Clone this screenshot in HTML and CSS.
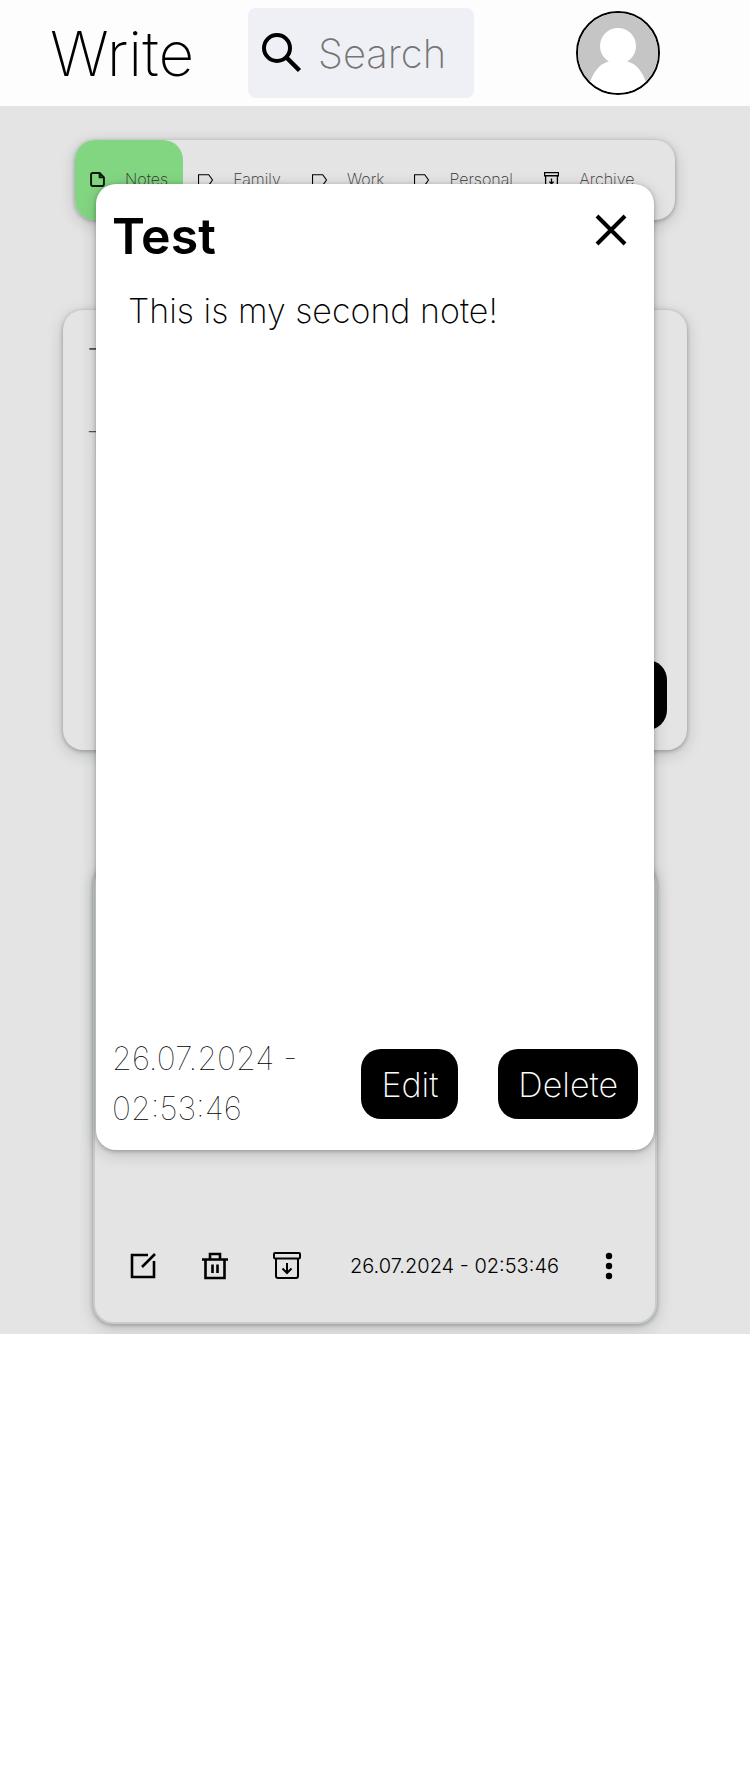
FILE: index.html
```html
<!DOCTYPE html>
<html lang="en">
<head>
<meta charset="utf-8">
<meta name="viewport" content="width=device-width, initial-scale=1">
<title>Write</title>
<link rel="stylesheet" href="styles.css">
</head>
<body>
<header class="topbar">
  <h1 class="brand">Write</h1>
  <label class="search">
    <svg class="search-icon" viewBox="0 0 40 40" aria-hidden="true"><circle cx="15" cy="15" r="13" fill="none" stroke="#000" stroke-width="4"/><path d="M24 24 37.500 37.500" stroke="#000" stroke-width="4.500"/></svg>
    <input class="search-input" type="search" placeholder="Search" aria-label="Search">
  </label>
  <button class="avatar" aria-label="Profile">
    <svg viewBox="0 0 80 80" aria-hidden="true"><rect width="80" height="80" fill="#c5c5c5"/><circle cx="40" cy="33" r="18" fill="#fff"/><path d="M32 48Q40 52 48 48C60 51 65 60 69 72V80H11V72C15 60 20 51 32 48Z" fill="#fff"/></svg>
  </button>
</header>
<main class="page">
  <nav class="tabs">
    <button class="tab tab-active"><svg class="tab-icon" viewBox="0 0 14 14" aria-hidden="true"><path d="M2.500 1H9L13 5V11.500Q13 13 11.500 13H2.500Q1 13 1 11.500V2.500Q1 1 2.500 1ZM9 1V5H13" fill="none" stroke="#0b1a0b" stroke-width="1.800"/></svg>Notes</button>
    <button class="tab"><svg class="tab-icon" viewBox="0 0 14 14" aria-hidden="true"><path d="M.5 2.500H10L13.500 7.500 10 12.500H.5Z" fill="none" stroke="#000"/></svg>Family</button>
    <button class="tab"><svg class="tab-icon" viewBox="0 0 14 14" aria-hidden="true"><path d="M.5 2.500H10L13.500 7.500 10 12.500H.5Z" fill="none" stroke="#000"/></svg>Work</button>
    <button class="tab"><svg class="tab-icon" viewBox="0 0 14 14" aria-hidden="true"><path d="M.5 2.500H10L13.500 7.500 10 12.500H.5Z" fill="none" stroke="#000"/></svg>Personal</button>
    <button class="tab"><svg class="tab-icon" viewBox="0 0 14 14" aria-hidden="true"><path d="M.5.5H13.500V3.500H.5ZM1.500 3.500V13.500H12.500V3.500M7 6V11M5 9 7 11 9 9" fill="none" stroke="#000" stroke-width="1.200"/></svg>Archive</button>
  </nav>
  <form class="composer">
    <input class="composer-title" type="text" placeholder="Title" aria-label="Title">
    <textarea class="composer-text" placeholder="Take a note..." aria-label="Note"></textarea>
    <button class="button composer-save" type="button">Save</button>
  </form>
  <article class="note">
    <footer class="note-footer">
      <button class="icon-button" aria-label="Edit note"><svg viewBox="0 0 28 28" aria-hidden="true"><path d="M19 3H3V25H25V9M13 15 26 2" fill="none" stroke="#000" stroke-width="2.600"/></svg></button>
      <button class="icon-button" aria-label="Delete note"><svg viewBox="0 0 28 28" aria-hidden="true"><path d="M1 7.500H27M4.500 7.500V26H23.500V7.500M9 7V2H19V7M11.500 12.500V21M16.500 12.500V21" fill="none" stroke="#000" stroke-width="2.600"/></svg></button>
      <button class="icon-button" aria-label="Archive note"><svg viewBox="0 0 28 28" aria-hidden="true"><path d="M2 1H26Q27 1 27 2V5Q27 6.500 25.500 6.500H2.500Q1 6.500 1 5V2Q1 1 2 1ZM3 6.500V24Q3 26 5 26H23Q25 26 25 24V6.500M14 11V21M9.500 16.500 14 21 18.500 16.500" fill="none" stroke="#000" stroke-width="2"/></svg></button>
      <time class="note-date">26.07.2024 - 02:53:46</time>
      <button class="icon-button icon-narrow" aria-label="More"><svg viewBox="8 0 12 28" aria-hidden="true"><circle cx="14" cy="4" r="3.200"/><circle cx="14" cy="14" r="3.200"/><circle cx="14" cy="24" r="3.200"/></svg></button>
    </footer>
  </article>
  <section class="modal" role="dialog" aria-labelledby="note-title">
    <div class="modal-head">
      <h2 class="modal-title" id="note-title">Test</h2>
      <button class="close" aria-label="Close"><svg viewBox="0 0 32 32" aria-hidden="true"><path d="M2 2 30 30M30 2 2 30" stroke="#000" stroke-width="4"/></svg></button>
    </div>
    <p class="modal-text">This is my second note!</p>
    <div class="modal-foot">
      <time class="modal-date">26.07.2024 - 02:53:46</time>
      <button class="button">Edit</button>
      <button class="button">Delete</button>
    </div>
  </section>
</main>
</body>
</html>
```
FILE: styles.css
```css
* { box-sizing: border-box; }

body {
  margin: 0;
  background: #fff;
  color: #000;
  font-family: Inter, "Open Sans", sans-serif;
  font-weight: 200;
}

button, input, textarea { font: inherit; color: inherit; }
button { border: 0; padding: 0; background: none; }
svg { display: block; }

.topbar {
  display: flex;
  align-items: center;
  height: 106px;
  padding: 0 90px 0 50px;
  background: #fdfdfd;
}

.brand { width: 198px; margin: 0; font-size: 62px; font-weight: 200; }

.search {
  display: flex;
  align-items: center;
  gap: 16px;
  width: 226px;
  height: 90px;
  padding: 0 14px;
  border-radius: 8px;
  background: #eff0f6;
}

.search-icon { flex: none; width: 40px; height: 40px; }

.search-input {
  flex: 1;
  min-width: 0;
  padding: 0;
  border: 0;
  outline: 0;
  background: none;
  appearance: none;
  font-size: 40px;
}

.search-input::-webkit-search-cancel-button { display: none; }
.search-input::placeholder { color: #757575; }

.avatar {
  width: 84px;
  height: 84px;
  margin-left: auto;
  overflow: hidden;
  border: 2px solid #000;
  border-radius: 50%;
}

.page {
  position: relative;
  display: flex;
  flex-direction: column;
  align-items: center;
  padding: 34px 0 10px;
  background: #e4e4e4;
}

.tabs, .composer, .note, .modal {
  border-radius: 20px;
  box-shadow: 0 1px 4px rgba(12, 22, 20, .3), 0 4px 16px rgba(12, 22, 20, .18);
}

.tabs {
  display: grid;
  grid-template-columns: 108fr 114fr 102fr 130fr 146fr;
  width: 80%;
  height: 80px;
  background: #e4e4e4;
}

.tab {
  display: flex;
  align-items: center;
  gap: 20px;
  padding: 0 15px 2px;
  color: #333;
  font-size: 16px;
}

.tab-active { border-radius: 20px 20px 0 20px; background: #82d682; }
.tab-icon { flex: none; width: 15px; height: 15px; }

.composer {
  display: flex;
  flex-direction: column;
  width: calc(100% - 126px);
  height: 440px;
  margin-top: 90px;
  padding: 22px 20px 20px 24px;
  background: #e4e4e4;
}

.composer-title, .composer-text {
  padding: 0;
  border: 0;
  outline: 0;
  background: none;
  resize: none;
}

.composer-title { height: 60px; font-size: 40px; }
.composer-text { flex: 1; padding-top: 32px; font-size: 32px; }
.composer-title::placeholder, .composer-text::placeholder { color: #555; }
.composer-save { align-self: flex-end; }

.button {
  height: 70px;
  padding: 0 20px;
  border-radius: 20px;
  background: #000;
  color: #fff;
  font-size: 34px;
}

.note {
  display: flex;
  flex-direction: column;
  justify-content: flex-end;
  width: calc(100% - 186px);
  height: 460px;
  margin-top: 114px;
  padding: 0 40px 42px 34px;
  border: 2px solid #c9caca;
  background: #e4e4e4;
}

.note-footer { display: flex; align-items: center; gap: 44px; }
.icon-button { flex: none; width: 28px; height: 28px; }
.icon-narrow { width: 12px; }
.note-date { flex: 1; text-align: right; font-size: 20px; font-weight: 300; white-space: nowrap; }

.modal {
  position: absolute;
  top: 78px;
  left: 96px;
  right: 96px;
  display: flex;
  flex-direction: column;
  height: 966px;
  padding: 16px;
  background: #fff;
}

.modal-head { display: flex; align-items: flex-start; justify-content: space-between; padding-right: 11px; }
.modal-title { margin: 0; font-size: 50px; font-weight: 600; line-height: 72px; }
.close { width: 32px; height: 32px; margin-top: 14px; }
.modal-text { flex: 1; margin: 0; padding: 14px 16px; font-size: 34px; line-height: 50px; }
.modal-foot { display: flex; align-items: center; gap: 40px; }
.modal-date { flex: 1; font-size: 32px; font-weight: 100; line-height: 50px; }
```
